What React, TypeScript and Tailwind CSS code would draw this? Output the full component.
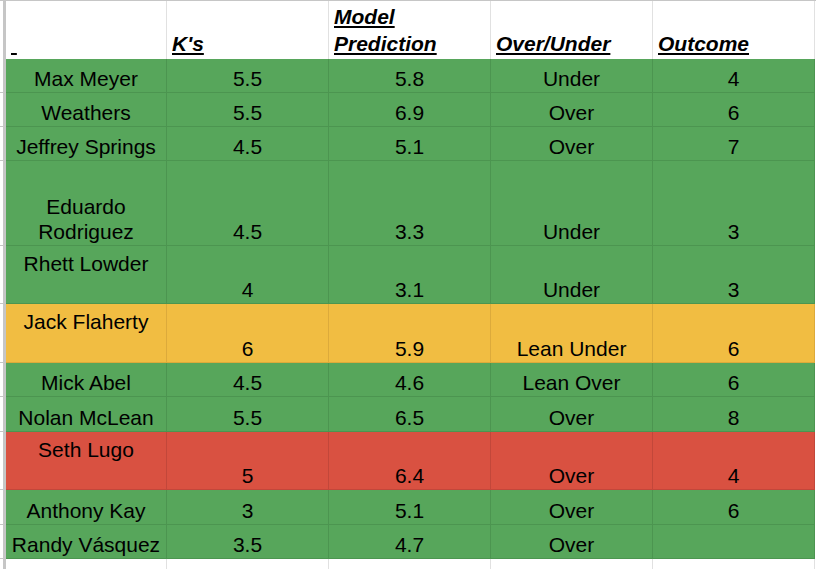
type Tone = "green" | "yellow" | "red";

interface Pick {
  name: string;
  ks: string;
  model: string;
  ou: string;
  outcome: string;
  height: string;
  tone: Tone;
  nameTop?: boolean;
}

const tones: Record<Tone, string> = {
  green: "bg-[#57a65b] border-[#4c9550]",
  yellow: "bg-[#f1bd42] border-[#dcaa3b]",
  red: "bg-[#d95141] border-[#c2473a]",
};

const picks: Pick[] = [
  { name: "Max Meyer", ks: "5.5", model: "5.8", ou: "Under", outcome: "4", height: "h-[34px]", tone: "green" },
  { name: "Weathers", ks: "5.5", model: "6.9", ou: "Over", outcome: "6", height: "h-[34px]", tone: "green" },
  { name: "Jeffrey Springs", ks: "4.5", model: "5.1", ou: "Over", outcome: "7", height: "h-[34px]", tone: "green" },
  { name: "Eduardo Rodriguez", ks: "4.5", model: "3.3", ou: "Under", outcome: "3", height: "h-[85px]", tone: "green" },
  { name: "Rhett Lowder", ks: "4", model: "3.1", ou: "Under", outcome: "3", height: "h-[58px]", tone: "green", nameTop: true },
  { name: "Jack Flaherty", ks: "6", model: "5.9", ou: "Lean Under", outcome: "6", height: "h-[59px]", tone: "yellow", nameTop: true },
  { name: "Mick Abel", ks: "4.5", model: "4.6", ou: "Lean Over", outcome: "6", height: "h-[34px]", tone: "green" },
  { name: "Nolan McLean", ks: "5.5", model: "6.5", ou: "Over", outcome: "8", height: "h-[35px]", tone: "green" },
  { name: "Seth Lugo", ks: "5", model: "6.4", ou: "Over", outcome: "4", height: "h-[58px]", tone: "red", nameTop: true },
  { name: "Anthony Kay", ks: "3", model: "5.1", ou: "Over", outcome: "6", height: "h-[35px]", tone: "green" },
  { name: "Randy Vásquez", ks: "3.5", model: "4.7", ou: "Over", outcome: "", height: "h-[34px]", tone: "green" },
];

const cols = "grid grid-cols-[6px_161px_162px_162px_162px_162px]";
const gutter = "border-r-[3px] border-b border-[#c6c6c6] bg-white";

const Cell = ({ value, tone, top }: { value: string; tone: Tone; top?: boolean }) => (
  <div
    className={`flex justify-center text-center border-r border-b px-[2px] ${tones[tone]} ${
      top ? "items-start pt-[5px]" : "items-end pb-[1px]"
    }`}
  >
    <span>{value}</span>
  </div>
);

const HeaderCell = ({ children }: { children: React.ReactNode }) => (
  <div className="flex items-end border-r border-[#e1e1e1] pl-[5px] pb-[2px] font-bold italic underline leading-[27px]">
    <span>{children}</span>
  </div>
);

export default function App() {
  return (
    <div
      className="w-[816px] h-[569px] overflow-hidden bg-white text-black text-[21px] leading-[25px]"
      style={{ fontFamily: '"Liberation Sans", Arial, sans-serif' }}
    >
      {/* header row */}
      <div className={`${cols} h-[59px] border-t border-[#c6c6c6]`}>
        <div className="border-r-[3px] border-[#c6c6c6] bg-white" />
        <HeaderCell>{"\u00a0"}</HeaderCell>
        <HeaderCell>K's</HeaderCell>
        <HeaderCell>
          Model
          <br />
          Prediction
        </HeaderCell>
        <HeaderCell>Over/Under</HeaderCell>
        <HeaderCell>Outcome</HeaderCell>
      </div>

      {picks.map((p) => (
        <div key={p.name} className={`${cols} ${p.height}`}>
          <div className={gutter} />
          <Cell value={p.name} tone={p.tone} top={p.nameTop} />
          <Cell value={p.ks} tone={p.tone} />
          <Cell value={p.model} tone={p.tone} />
          <Cell value={p.ou} tone={p.tone} />
          <Cell value={p.outcome} tone={p.tone} />
        </div>
      ))}

      {/* empty sheet row below */}
      <div className={`${cols} h-[20px]`}>
        <div className="border-r-[3px] border-[#c6c6c6] bg-white" />
        <div className="border-r border-[#e1e1e1]" />
        <div className="border-r border-[#e1e1e1]" />
        <div className="border-r border-[#e1e1e1]" />
        <div className="border-r border-[#e1e1e1]" />
        <div className="border-r border-[#e1e1e1]" />
      </div>
    </div>
  );
}
